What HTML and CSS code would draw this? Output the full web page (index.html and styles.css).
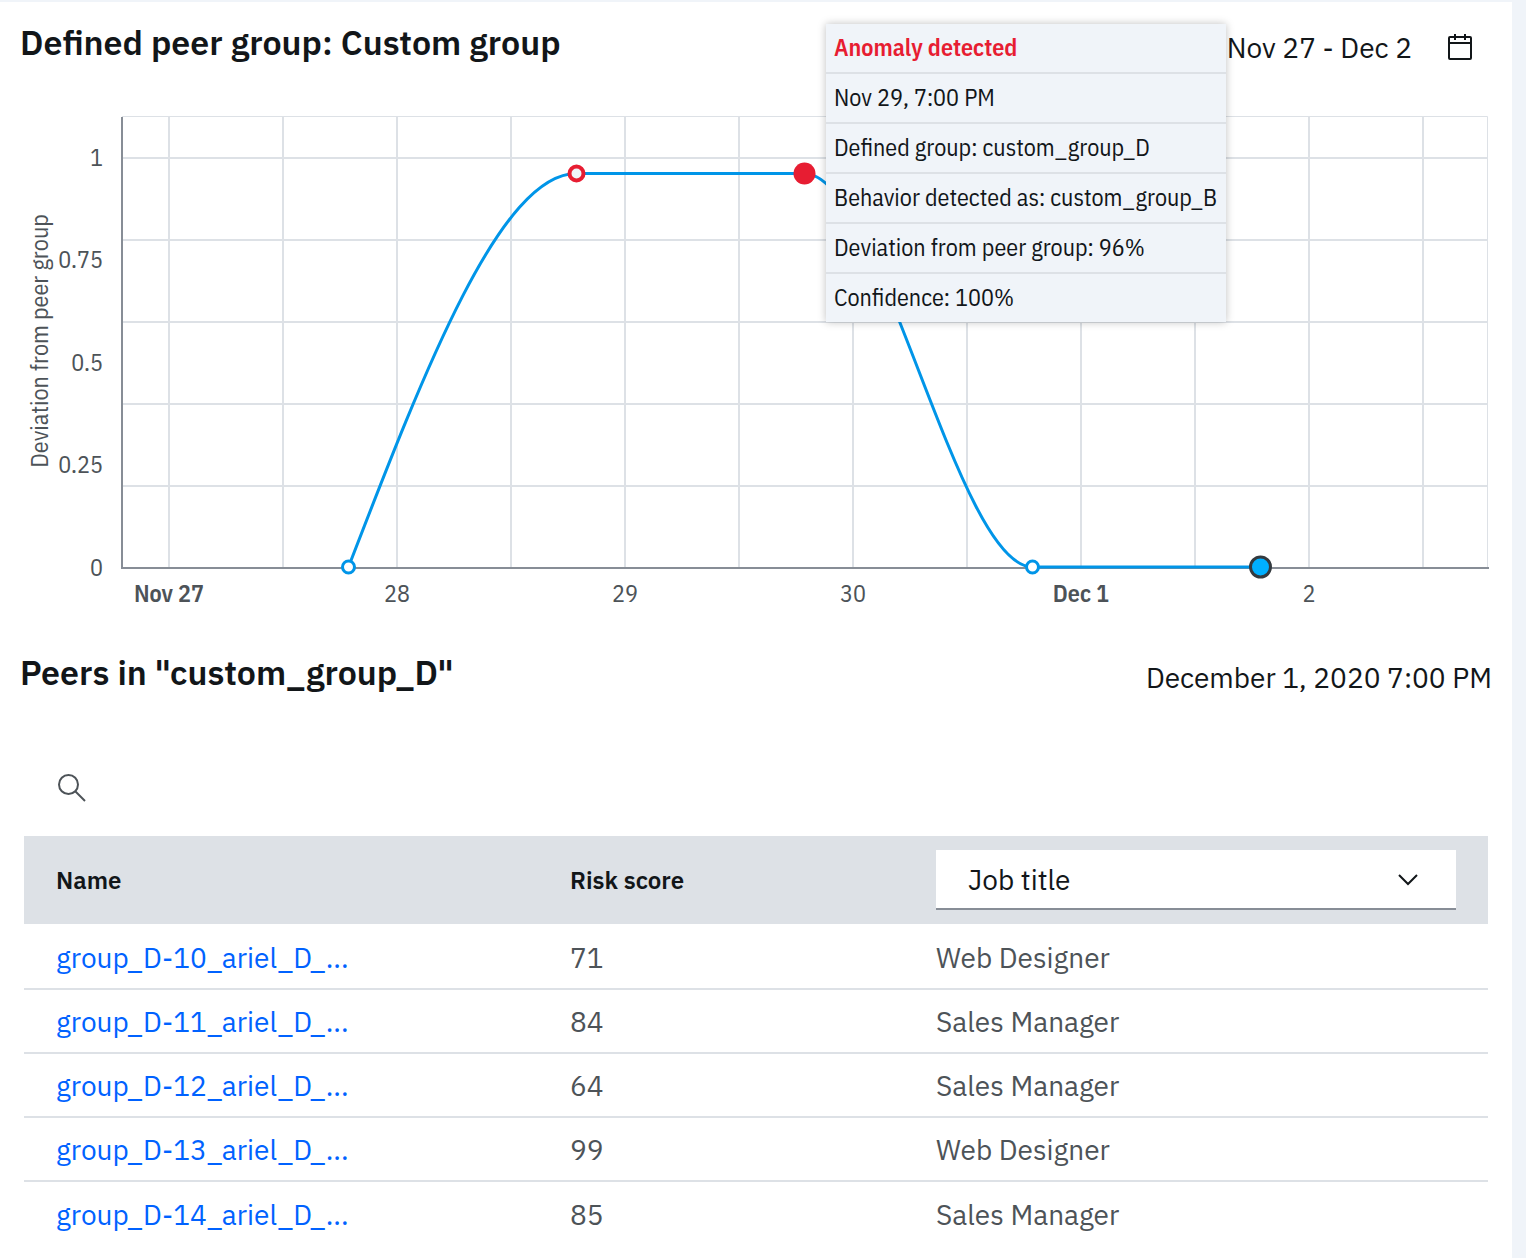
FILE: index.html
```html
<!DOCTYPE html>
<html lang="en">
<head>
  <meta charset="UTF-8">
  <title>Peer group</title>
  <link rel="stylesheet" href="styles.css">
</head>
<body>

<main class="panel">

  <!-- chart -->
  <section class="chart-section">
    <header class="section-header">
      <h2>Defined peer group: Custom group</h2>
      <div class="date-range">
        <span>Nov 27 - Dec 2</span>
        <button type="button" class="icon-button" aria-label="Choose dates">
          <svg class="icon" viewBox="0 0 32 32">
            <path d="M26 4h-4V2h-2v2h-8V2h-2v2H6a2 2 0 0 0-2 2v20a2 2 0 0 0 2 2h20a2 2 0 0 0 2-2V6a2 2 0 0 0-2-2zm0 22H6V12h20v14zm0-16H6V6h4v2h2V6h8v2h2V6h4v4z"/>
          </svg>
        </button>
      </div>
    </header>

    <svg class="chart" viewBox="0 0 1512 548" role="img" aria-label="Deviation from peer group">
      <g class="grid-edge">
        <path d="M122 24.5H1487.5V475"/>
      </g>
      <g class="grid">
        <path d="M122 66H1488M122 148H1488M122 230H1488M122 312H1488M122 394H1488"/>
        <path d="M169 24V475M283 24V475M397 24V475M511 24V475M625 24V475M739 24V475M853 24V475M967 24V475M1081 24V475M1195 24V475M1309 24V475M1423 24V475"/>
      </g>
      <path class="axis" d="M122 25V476H1489"/>
      <g class="y-labels">
        <text x="103" y="74">1</text>
        <text x="103" y="176">0.75</text>
        <text x="103" y="279">0.5</text>
        <text x="103" y="381">0.25</text>
        <text x="103" y="484">0</text>
      </g>
      <text class="axis-title" transform="translate(48 249) rotate(-90)">Deviation from peer group</text>
      <g class="x-labels">
        <text class="month" x="169" y="510">Nov 27</text>
        <text x="397" y="510">28</text>
        <text x="625" y="510">29</text>
        <text x="853" y="510">30</text>
        <text class="month" x="1081" y="510">Dec 1</text>
        <text x="1309" y="510">2</text>
      </g>
      <path class="line" d="M348.5 475C424.5 278 500.5 81.5 576.5 81.5H804.5C880.5 81.5 956.5 475 1032.5 475H1260"/>
      <circle class="point" cx="348.5" cy="475" r="6"/>
      <circle class="point anomaly" cx="576.5" cy="81.5" r="7"/>
      <circle class="point anomaly-active" cx="804.5" cy="81.5" r="11"/>
      <circle class="point" cx="1032.5" cy="475" r="6"/>
      <circle class="point selected" cx="1260.5" cy="475" r="10"/>
    </svg>

    <ul class="tooltip">
      <li class="tooltip-title">Anomaly detected</li>
      <li>Nov 29, 7:00 PM</li>
      <li>Defined group: custom_group_D</li>
      <li>Behavior detected as: custom_group_B</li>
      <li>Deviation from peer group: 96%</li>
      <li>Confidence: 100%</li>
    </ul>
  </section>

  <!-- peers -->
  <section class="peers-section">
    <header class="section-header">
      <h2>Peers in "custom_group_D"</h2>
      <span class="peers-date">December 1, 2020 7:00 PM</span>
    </header>

    <div class="toolbar">
      <button type="button" class="icon-button" aria-label="Search">
        <svg class="icon icon-search" viewBox="0 0 32 32">
          <circle cx="12.5" cy="12.5" r="9.5"/>
          <path d="M19.5 19.5L29 29"/>
        </svg>
      </button>
    </div>

    <table class="peers">
      <colgroup>
        <col class="col-name">
        <col class="col-score">
        <col>
      </colgroup>
      <thead>
        <tr>
          <th>Name</th>
          <th>Risk score</th>
          <th>
            <div class="dropdown">
              <select aria-label="Attribute">
                <option>Job title</option>
              </select>
              <svg class="chevron" viewBox="0 0 20 12"><path d="M1 1L10 10L19 1"/></svg>
            </div>
          </th>
        </tr>
      </thead>
      <tbody>
        <tr><td><a href="#">group_D-10_ariel_D_...</a></td><td>71</td><td>Web Designer</td></tr>
        <tr><td><a href="#">group_D-11_ariel_D_...</a></td><td>84</td><td>Sales Manager</td></tr>
        <tr><td><a href="#">group_D-12_ariel_D_...</a></td><td>64</td><td>Sales Manager</td></tr>
        <tr><td><a href="#">group_D-13_ariel_D_...</a></td><td>99</td><td>Web Designer</td></tr>
        <tr><td><a href="#">group_D-14_ariel_D_...</a></td><td>85</td><td>Sales Manager</td></tr>
      </tbody>
    </table>
  </section>

</main>

</body>
</html>
```
FILE: styles.css
```css
* { box-sizing: border-box; }
body {
  margin: 0;
  padding: 2px 14px 0 0;
  background: #f0f4f9;
  color: #121619;
  font-family: "IBM Plex Sans", "Noto Sans", sans-serif;
  font-size: 28px;
}
.panel {
  min-height: calc(100vh - 2px);
  background: #fff;
}

.section-header {
  display: flex;
  justify-content: space-between;
  align-items: flex-start;
  padding: 20px 20px 0;
}
h2 {
  margin: 0;
  font-size: 34px;
  line-height: 40px;
  font-weight: 600;
}
.date-range {
  display: flex;
  align-items: center;
  gap: 32px;
  padding: 6px 16px 0 0;
  line-height: 40px;
}
.icon-button {
  display: flex;
  padding: 0;
  border: 0;
  background: none;
  cursor: pointer;
}
.icon { width: 32px; height: 32px; fill: #121619; }

/* chart */
.chart-section { position: relative; }
.chart-section .section-header { height: 90px; }
.chart {
  display: block;
  width: 100%;
  height: auto;
  font-family: "IBM Plex Sans Condensed", Roboto, sans-serif;
  font-size: 24px;
  fill: #4d5358;
}
.grid-edge path { fill: none; stroke: #dde1e6; }
.grid path { fill: none; stroke: #dde1e6; stroke-width: 2; }
.axis { fill: none; stroke: #878d96; stroke-width: 2; }
.y-labels { text-anchor: end; }
.x-labels, .axis-title { text-anchor: middle; }
.month { font-weight: 600; }
.line { fill: none; stroke: #0095e8; stroke-width: 3; }
.point { fill: #fff; stroke: #0095e8; stroke-width: 3; }
.point.anomaly { fill: #f0f4f9; stroke: #e71d32; stroke-width: 4; }
.point.anomaly-active { fill: #e71d32; stroke: none; }
.point.selected { fill: #00b0ff; stroke: #343a3f; }

.tooltip {
  position: absolute;
  top: 22px;
  left: 826px;
  width: 400px;
  margin: 0;
  padding: 0;
  list-style: none;
  background: #f0f4f9;
  box-shadow: 0 0 8px rgba(0,0,0,0.25);
  font-family: "IBM Plex Sans Condensed", Roboto, sans-serif;
  font-size: 24px;
  line-height: 46px;
  white-space: nowrap;
}
.tooltip li {
  height: 50px;
  padding: 0 8px;
  border-bottom: 2px solid #dde1e6;
}
.tooltip li:last-child { height: 48px; border-bottom: 0; }
.tooltip .tooltip-title { color: #e71d32; font-weight: 600; }

/* peers */
.peers-section .section-header { padding-top: 12px; }
.peers-date { padding-top: 6px; line-height: 40px; }
.toolbar { padding: 74px 56px 32px; }
.icon-search { fill: none; stroke: #4d5358; stroke-width: 2; }

.peers {
  width: calc(100% - 48px);
  margin: 0 24px;
  border-spacing: 0;
  table-layout: fixed;
}
.col-name { width: 514px; }
.col-score { width: 366px; }
.peers th, .peers td { padding: 0 32px; text-align: left; }
.peers th {
  height: 90px;
  background: #dde1e6;
  border-bottom: 2px solid #fff;
  font-size: 24px;
  font-weight: 600;
}
.peers td {
  height: 64px;
  border-bottom: 2px solid #dde1e6;
  color: #4d5358;
}
.peers tr:last-child td { border-bottom: 0; }
.peers a { color: #0062ff; text-decoration: none; }
.peers thead tr:last-child th { border-bottom: 2px solid #fff; }

.dropdown { position: relative; }
.dropdown select {
  display: block;
  width: 100%;
  height: 60px;
  padding: 0 32px;
  border: 0;
  border-bottom: 2px solid #878d96;
  border-radius: 0;
  background: #fff;
  color: #121619;
  font-family: inherit;
  font-size: 28px;
  appearance: none;
}
.chevron {
  position: absolute;
  top: 24px;
  right: 38px;
  width: 20px;
  height: 12px;
  fill: none;
  stroke: #121619;
  stroke-width: 2;
  pointer-events: none;
}
```
